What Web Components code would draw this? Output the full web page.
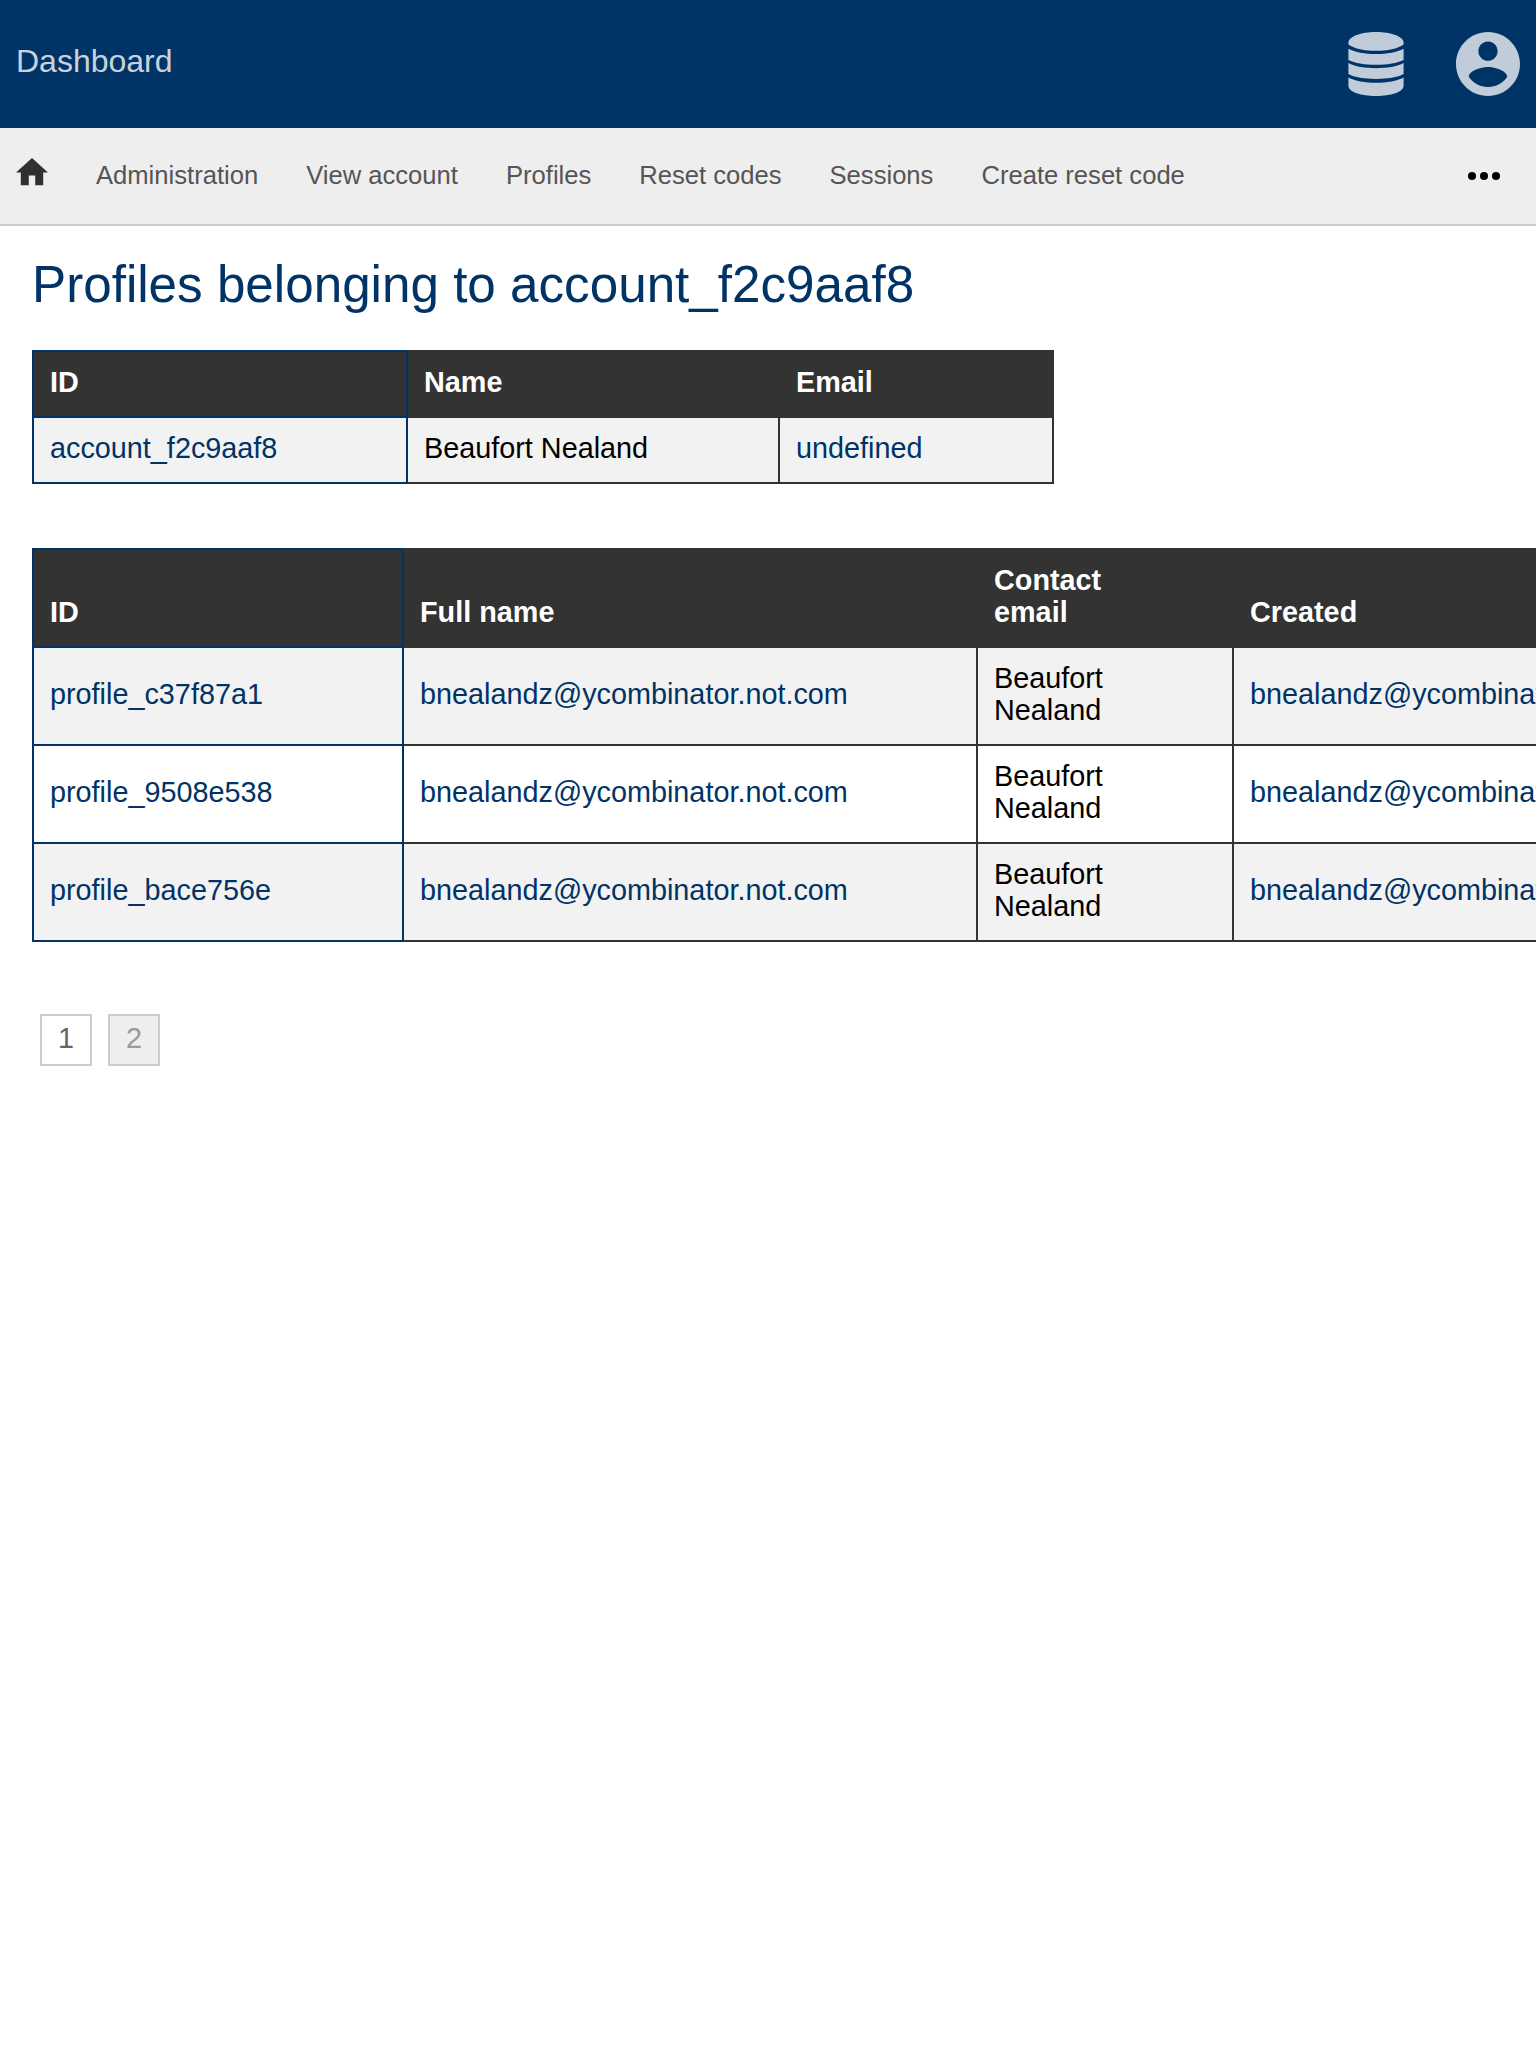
<!DOCTYPE html>
<html lang="en">
<head>
<meta charset="utf-8">
<title>Dashboard</title>
<style>
html, body { margin: 0; background: #fff; overflow-x: hidden; }
body { font-family: "Liberation Sans", Arial, sans-serif; font-size: 32px; color: #000; }
</style>
</head>
<body>
<dash-header heading="Dashboard"></dash-header>
<dash-nav>
  <nav-link>Administration</nav-link>
  <nav-link>View account</nav-link>
  <nav-link>Profiles</nav-link>
  <nav-link>Reset codes</nav-link>
  <nav-link>Sessions</nav-link>
  <nav-link>Create reset code</nav-link>
</dash-nav>
<dash-page>
  <span slot="title">Profiles belonging to account_f2c9aaf8</span>
  <data-table id="account"></data-table>
  <data-table id="profiles"></data-table>
  <page-list>
    <page-button current>1</page-button>
    <page-button>2</page-button>
  </page-list>
</dash-page>
<script>
const define = (name, html, setup) => {
  const template = document.createElement('template');
  template.innerHTML = html;
  customElements.define(name, class extends HTMLElement {
    constructor() {
      super();
      this.attachShadow({ mode: 'open' }).append(template.content.cloneNode(true));
    }
    connectedCallback() { if (setup) setup(this, this.shadowRoot); }
  });
};

define('dash-header', `
<style>
:host { display: flex; align-items: center; justify-content: space-between; height: 128px; padding: 0 16px; box-sizing: border-box; background: #003366; }
h1 { margin: 0; padding-bottom: 6px; font-size: 32px; font-weight: 400; line-height: 36px; color: rgba(255,255,255,.8); }
.icons { display: flex; align-items: center; gap: 52px; fill: #c0ccd9; }
svg { display: block; }
</style>
<h1></h1>
<div class="icons">
  <svg width="56" height="64" viewBox="0 0 56 64">
    <g transform="translate(.4 0) scale(.986 1)">
    <path d="M0 10.500C0 4.700 12.500 0 28 0s28 4.700 28 10.500v1.900C50 16.700 39.500 18.800 28 18.800S6 16.700 0 12.400z"/>
    <path d="M0 16.700C6.500 20.300 17 22 28 22S49.500 20.300 56 16.700v11.200C50 31.100 39 32.700 28 32.700S6 31.100 0 27.900z"/>
    <path d="M0 31.100C6.500 34.500 17 36.300 28 36.300s21.500-1.800 28-5.200v11C50 45.400 39 47 28 47S6 45.400 0 42.100z"/>
    <path d="M0 45.400C6.500 48.800 17 50.700 28 50.700s21.500-1.900 28-5.300v8.100C56 60 43.500 64 28 64S0 60 0 53.500z"/>
    </g>
  </svg>
  <svg width="64" height="64" viewBox="2 2 20 20"><path d="M12 2C6.480 2 2 6.480 2 12s4.480 10 10 10 10-4.480 10-10S17.520 2 12 2zm0 3c1.660 0 3 1.340 3 3s-1.340 3-3 3-3-1.340-3-3 1.340-3 3-3zm0 14.200c-2.500 0-4.710-1.280-6-3.220.03-1.990 4-3.080 6-3.080 1.990 0 5.970 1.090 6 3.080-1.290 1.940-3.500 3.220-6 3.220z"/></svg>
</div>`, (el, root) => { root.querySelector('h1').textContent = el.getAttribute('heading'); });

define('dash-nav', `
<style>
:host { display: flex; align-items: center; height: 98px; padding: 0 36px 0 16px; box-sizing: border-box; background: #eee; border-bottom: 2px solid #ccc; }
.links { display: flex; flex: 1; gap: 48px; margin-left: 48px; padding-bottom: 2px; }
.home { display: block; margin-bottom: 8px; fill: #303030; }
.more { display: block; }
</style>
<svg class="home" width="32" height="27.2" viewBox="2 3 20 17"><path d="M10 20v-6h4v6h5v-8h3L12 3 2 12h3v8z"/></svg>
<div class="links"><slot></slot></div>
<svg class="more" width="32" height="8" viewBox="0 0 32 8"><circle cx="4" cy="4" r="4"/><circle cx="16" cy="4" r="4"/><circle cx="28" cy="4" r="4"/></svg>`);

define('nav-link', `
<style>:host { display: block; font-size: 25.6px; line-height: 30px; color: #555; white-space: nowrap; }</style>
<slot></slot>`);

define('dash-page', `
<style>
:host { display: flex; flex-direction: column; align-items: flex-start; padding: 30px 32px; overflow: hidden; }
h2 { margin: 0 0 37px; font-size: 51.2px; font-weight: 400; line-height: 57px; color: #003366; }
</style>
<h2><slot name="title"></slot></h2><slot></slot>`);

define('data-table', `
<style>
:host { display: block; margin-bottom: 64px; font-size: 28.8px; line-height: 32px; }
table { border-collapse: collapse; table-layout: fixed; }
th, td { padding: 14px 16px 18px; border: 2px solid #333; text-align: left; }
th { padding-right: 64px; background: #333; color: #fff; vertical-align: bottom; }
tr > :first-child { border-color: #003366; }
tbody tr:nth-child(odd) { background: #f2f2f2; }
.link { color: #003366; }
</style>
<table><colgroup></colgroup><thead><tr></tr></thead><tbody></tbody></table>`);

define('page-list', `
<style>:host { display: flex; gap: 16px; margin: 8px 0 0 8px; }</style><slot></slot>`);

define('page-button', `
<style>
:host { display: block; width: 52px; height: 52px; box-sizing: border-box; border: 2px solid #ccc; background: #eee; color: #999; font-size: 28.8px; line-height: 44px; text-align: center; }
:host([current]) { background: #fff; color: #666; }
</style><slot></slot>`);

function fill(id, columns, rows) {
  const root = document.getElementById(id).shadowRoot;
  const total = columns.reduce((sum, c) => sum + c.width, 2);
  root.querySelector('table').style.width = total + 'px';
  for (const c of columns) {
    const col = document.createElement('col');
    col.style.width = c.width + 'px';
    root.querySelector('colgroup').append(col);
    const th = document.createElement('th');
    th.textContent = c.label;
    root.querySelector('thead tr').append(th);
  }
  for (const row of rows) {
    const tr = document.createElement('tr');
    row.forEach((text, i) => {
      const td = document.createElement('td');
      td.textContent = text;
      if (columns[i].link) td.className = 'link';
      tr.append(td);
    });
    root.querySelector('tbody').append(tr);
  }
}

fill('account', [
  { label: 'ID', width: 374, link: true },
  { label: 'Name', width: 372 },
  { label: 'Email', width: 274, link: true }
], [['account_f2c9aaf8', 'Beaufort Nealand', 'undefined']]);

fill('profiles', [
  { label: 'ID', width: 370, link: true },
  { label: 'Full name', width: 574, link: true },
  { label: 'Contact email', width: 256 },
  { label: 'Created', width: 574, link: true }
], ['profile_c37f87a1', 'profile_9508e538', 'profile_bace756e'].map(id =>
  [id, 'bnealandz@ycombinator.not.com', 'Beaufort Nealand', 'bnealandz@ycombinator.not.com']));
</script>
</body>
</html>
